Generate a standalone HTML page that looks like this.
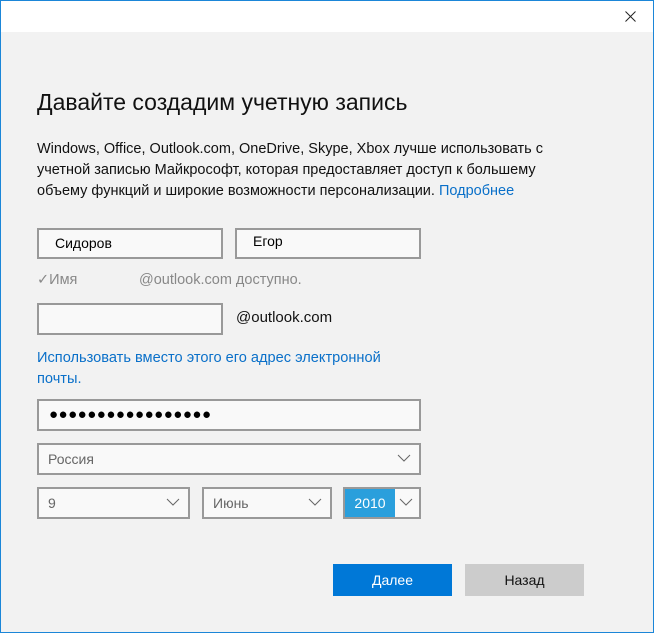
<!DOCTYPE html>
<html><head><meta charset="utf-8"><style>
*{box-sizing:border-box;margin:0;padding:0}
body{width:654px;height:633px;position:relative;overflow:hidden;font-family:"Liberation Sans",sans-serif;background:#f2f2f2}
.frame{position:absolute;left:0;top:0;width:654px;height:633px;border:1px solid #1b86d8;z-index:5;pointer-events:none}
.top{position:absolute;left:0;top:0;width:654px;height:32px;background:#fff}
.a{position:absolute;white-space:nowrap}
.box{position:absolute;border:2px solid #999;background:#f9f9f9;font-size:14px;padding-left:16px;color:#000}
.sel{color:#666;padding-left:9px}
.chev{position:absolute;right:8px;top:6px}
.btn{position:absolute;top:564px;width:119px;height:32px;font-size:14px;text-align:center;line-height:32px}
</style></head><body>
<div class="top"></div>
<div class="frame"></div>
<svg class="a" style="left:625px;top:11px" width="11" height="11" viewBox="0 0 11 11"><path d="M0.5 0.5l10 10M10.5 0.5l-10 10" stroke="#222" stroke-width="1"/></svg>
<div class="a" style="left:37px;top:89px;font-size:23px;color:#111">Давайте создадим учетную запись</div>
<div class="a" style="left:37px;top:139px;font-size:14.5px;line-height:21px;color:#111">Windows, Office, Outlook.com, OneDrive, Skype, Xbox лучше использовать с<br>учетной записью Майкрософт, которая предоставляет доступ к большему<br>объему функций и широкие возможности персонализации. <span style="color:#0a70c9">Подробнее</span></div>
<div class="box" style="left:37px;top:228px;width:186px;height:31px;line-height:27px">Сидоров</div>
<div class="box" style="left:235px;top:228px;width:186px;height:31px;line-height:23px">Егор</div>
<div class="a" style="left:37px;top:272px;font-size:14.5px;color:#888">✓Имя</div>
<div class="a" style="left:139px;top:272px;font-size:14.5px;color:#888">@outlook.com доступно.</div>
<div class="box" style="left:37px;top:303px;width:186px;height:32px"></div>
<div class="a" style="left:236px;top:309px;font-size:15px;color:#111">@outlook.com</div>
<div class="a" style="left:37px;top:348px;font-size:14.6px;line-height:21px;color:#0a70c9">Использовать вместо этого его адрес электронной<br>почты.</div>
<div class="box" style="left:37px;top:399px;width:384px;height:32px;line-height:27px;padding-left:10px;font-size:15px;letter-spacing:0.5px">●●●●●●●●●●●●●●●●●</div>
<div class="box sel" style="left:37px;top:443px;width:384px;height:32px;line-height:28px">Россия<svg class="chev" width="14" height="14" viewBox="0 0 14 14"><path d="M1 4l6 6 6-6" fill="none" stroke="#666"/></svg></div>
<div class="box sel" style="left:37px;top:487px;width:153px;height:32px;line-height:28px">9<svg class="chev" width="14" height="14" viewBox="0 0 14 14"><path d="M1 4l6 6 6-6" fill="none" stroke="#666"/></svg></div>
<div class="box sel" style="left:202px;top:487px;width:130px;height:32px;line-height:28px">Июнь<svg class="chev" width="14" height="14" viewBox="0 0 14 14"><path d="M1 4l6 6 6-6" fill="none" stroke="#666"/></svg></div>
<div class="box" style="left:343px;top:487px;width:78px;height:32px;padding:0"><div style="position:absolute;left:0;top:0;width:50px;height:28px;background:#2a9fdc;color:#fff;font-size:14px;line-height:28px;text-align:center">2010</div><svg class="chev" style="right:6px" width="14" height="14" viewBox="0 0 14 14"><path d="M1 4l6 6 6-6" fill="none" stroke="#666"/></svg></div>
<div class="btn" style="left:333px;background:#0078d7;color:#fff">Далее</div>
<div class="btn" style="left:465px;background:#ccc;color:#111">Назад</div>
</body></html>
